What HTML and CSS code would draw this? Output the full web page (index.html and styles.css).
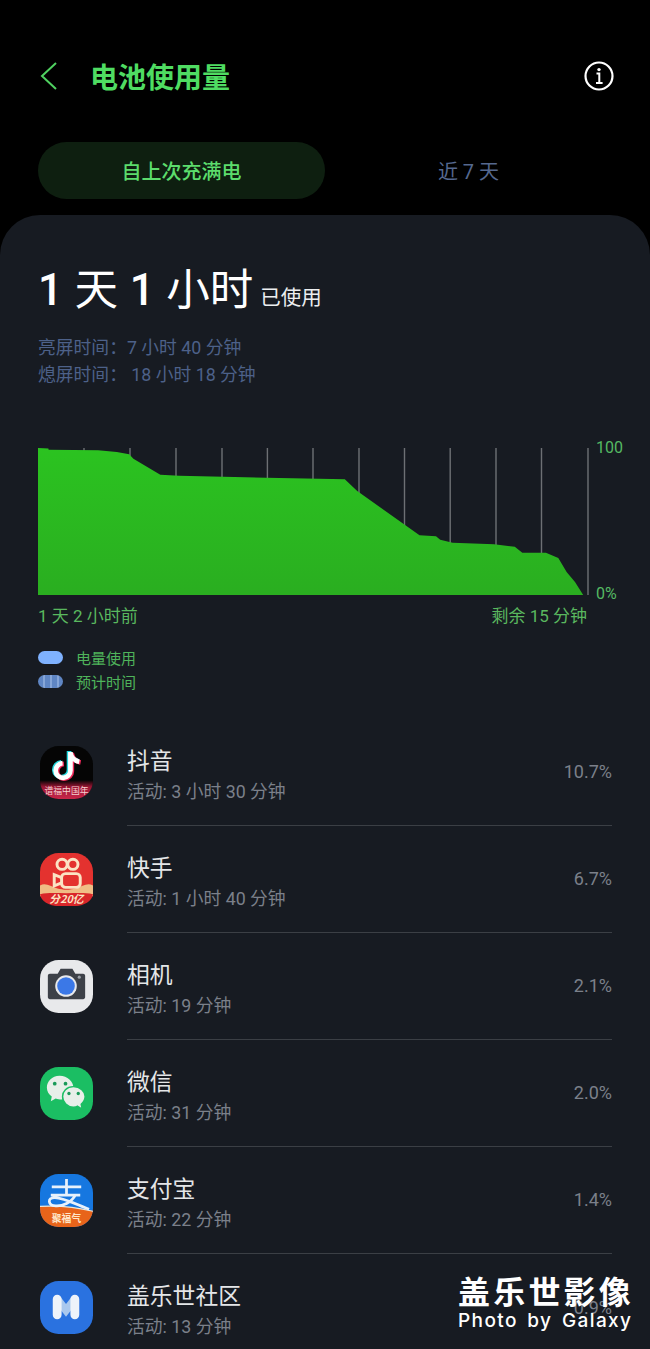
FILE: index.html
```html
<!DOCTYPE html>
<html lang="zh">
<head>
<meta charset="utf-8">
<title>电池使用量</title>
<link rel="stylesheet" href="styles.css">
</head>
<body>
<div class="screen">
  <header class="header">
    <svg class="back" width="20" height="30" viewBox="0 0 20 30"><path d="M18 2 L4 15 L18 28" fill="none" stroke="#4fd160" stroke-width="2"/></svg>
    <h1 class="title">电池使用量</h1>
    <svg class="info" width="30" height="30" viewBox="0 0 30 30"><circle cx="15" cy="15" r="13.500" fill="none" stroke="#fff" stroke-width="2.200"/><circle cx="15" cy="8.600" r="1.700" fill="#fff"/><path d="M12.500 12.600h2.800v9.400M12 22h6.600" fill="none" stroke="#fff" stroke-width="2"/></svg>
  </header>
  <nav class="tabs">
    <div class="tab tab-active">自上次充满电</div>
    <div class="tab">近 7 天</div>
  </nav>
  <main class="card">
    <div class="summary">
      <span class="big"><span class="num">1</span> 天 <span class="num">1</span> 小时</span>
      <span class="used">已使用</span>
    </div>
    <div class="times">
      <div>亮屏时间：7 小时 40 分钟</div>
      <div>熄屏时间： 18 小时 18 分钟</div>
    </div>
    <div class="chart-row">
      <svg class="chart" width="552" height="148" viewBox="0 0 552 148">
        <g stroke="#6d7074" stroke-width="1.400">
          <path d="M46 0V147M92 0V147M138 0V147M184 0V147M229.400 0V147M275 0V147M321 0V147M366.500 0V147M412.200 0V147M458 0V147M503.500 0V147M550 0V147"/>
        </g>
        <defs>
          <linearGradient id="area" x1="0" y1="0" x2="0" y2="1">
            <stop offset="0" stop-color="#2bc320"/>
            <stop offset="1" stop-color="#2aae20"/>
          </linearGradient>
        </defs>
        <path fill="url(#area)" d="M0 0L10.400 0.400L10.600 1.700L60.100 2.300L78.800 4L91.200 6.300L95.400 10.700L122.300 26.700L141 27.700L228 29.700L306.800 31.300L319.200 43L381.500 87.300L398 88.300L402.200 91.700L414.600 94.700L456 96.300L476.800 98.700L484.300 104.700L507.900 104.700L520.300 110L528.600 124L537 134L545.200 147L0 147Z"/>
      </svg>
      <div class="axis"><span>100</span><span>0%</span></div>
    </div>
    <div class="chart-labels"><span>1 天 2 小时前</span><span>剩余 15 分钟</span></div>
    <div class="legend">
      <div class="legend-item"><span class="swatch"></span>电量使用</div>
      <div class="legend-item"><span class="swatch swatch-est"></span>预计时间</div>
    </div>
    <ul class="apps">
      <li class="app">
        <svg class="icon" width="53" height="53" viewBox="0 0 54 54">
          <defs>
            <linearGradient id="tkband" x1="0" y1="0" x2="0" y2="1">
              <stop offset="0" stop-color="#050505"/>
              <stop offset=".35" stop-color="#9a1534"/>
              <stop offset="1" stop-color="#c8274a"/>
            </linearGradient>
          </defs>
          <rect width="54" height="54" rx="19" fill="#050505"/>
          <path d="M0 35H54C54 46 46 54 35 54H19C8 54 0 46 0 35Z" fill="url(#tkband)"/>
          <text x="27" y="49" class="icon-text" font-size="9" fill="#f6d0d0">谱福中国年</text>
          <g fill="none" stroke-width="4.800">
            <path d="M31 6V25A7.500 7.500 0 1 1 23 17.500M31 7C32 12 35 15 40 16" stroke="#25d7de" transform="translate(-1.400 -.8)"/>
            <path d="M31 6V25A7.500 7.500 0 1 1 23 17.500M31 7C32 12 35 15 40 16" stroke="#f2295b" transform="translate(1.400 .8)"/>
            <path d="M31 6V25A7.500 7.500 0 1 1 23 17.500M31 7C32 12 35 15 40 16" stroke="#fff"/>
          </g>
        </svg>
        <div class="app-body">
          <div><div class="app-name">抖音</div><div class="app-sub">活动: 3 小时 30 分钟</div></div>
          <div class="pct">10.7%</div>
        </div>
      </li>
      <li class="app">
        <svg class="icon" width="53" height="53" viewBox="0 0 54 54">
          <rect width="54" height="54" rx="19" fill="#e4322f"/>
          <path d="M0 33C6 30 11 34 17 36C24 38 30 38 37 36C43 34 48 30 54 33V44H0Z" fill="#f0bd85"/>
          <path d="M0 42C9 40 18 41 27 41C36 41 45 40 54 42C53 49 45 54 35 54H19C9 54 1 49 0 42Z" fill="#d9262a"/>
          <g fill="none" stroke="#fbe3c4" stroke-width="3">
            <circle cx="22.500" cy="11.500" r="5.200"/>
            <circle cx="33.500" cy="11.500" r="5.200"/>
            <rect x="22" y="21" width="19" height="14" rx="4"/>
            <path d="M22 25L14.500 22V33.500L22 30.500"/>
          </g>
          <text x="27" y="50.500" class="icon-text" font-size="11" font-style="italic" font-weight="700" fill="#fbe3c4">分20亿</text>
        </svg>
        <div class="app-body">
          <div><div class="app-name">快手</div><div class="app-sub">活动: 1 小时 40 分钟</div></div>
          <div class="pct">6.7%</div>
        </div>
      </li>
      <li class="app">
        <svg class="icon" width="53" height="53" viewBox="0 0 54 54">
          <rect width="54" height="54" rx="19" fill="#e8e9eb"/>
          <path d="M10 14H18L21 9H33L36 14H44C45 14 46 15 46 16V38C46 39 45 40 44 40H10C9 40 8 39 8 38V16C8 15 9 14 10 14Z" fill="#3d4148"/>
          <circle cx="26.500" cy="26.500" r="11" fill="#e8e9eb"/>
          <circle cx="26.500" cy="26.500" r="9" fill="#3b78e7"/>
          <circle cx="40" cy="17.500" r="1.600" fill="#9aa0a6"/>
        </svg>
        <div class="app-body">
          <div><div class="app-name">相机</div><div class="app-sub">活动: 19 分钟</div></div>
          <div class="pct">2.1%</div>
        </div>
      </li>
      <li class="app">
        <svg class="icon" width="53" height="53" viewBox="0 0 54 54">
          <rect width="54" height="54" rx="19" fill="#1bbe63"/>
          <path d="M20 9C12 9 7 15 7 21C7 25 9 28 12 30L11 35L16 32C18 33 20 33 22 33C29 33 34 27 34 21C34 15 28 9 20 9Z" fill="#e8efe9"/>
          <path d="M34 20C27 20 23 25 23 30C23 36 28 41 34 41C36 41 37 41 38 40L43 43L42 38C44 36 46 33 46 30C46 25 41 20 34 20Z" fill="#e8efe9" stroke="#1bbe63" stroke-width="1.500"/>
          <circle cx="15" cy="17" r="1.900" fill="#1a9a58"/><circle cx="26" cy="17" r="1.900" fill="#1a9a58"/>
          <circle cx="29.500" cy="27" r="1.700" fill="#1a9a58"/><circle cx="39" cy="27" r="1.700" fill="#1a9a58"/>
        </svg>
        <div class="app-body">
          <div><div class="app-name">微信</div><div class="app-sub">活动: 31 分钟</div></div>
          <div class="pct">2.0%</div>
        </div>
      </li>
      <li class="app">
        <svg class="icon" width="53" height="53" viewBox="0 0 54 54">
          <rect width="54" height="54" rx="19" fill="#1677e0"/>
          <path d="M0 33C18 32 38 34 54 38V35C54 46 46 54 35 54H19C8 54 0 46 0 35Z" fill="#e8641a"/>
          <path d="M0 33C18 32 38 34 54 38" fill="none" stroke="#f0e8d8" stroke-width="1.200"/>
          <g fill="none" stroke="#e8f1fb" stroke-width="2.800">
            <path d="M12 13H42M27 5V21M11 21.500H41M36 21.500C32 29 23 33 16 32.500C8 32 7 24 15 24C24 24 37 31 50 36"/>
          </g>
          <text x="27" y="49" class="icon-text" font-size="10" font-weight="700" fill="#ffe6c8">聚福气</text>
        </svg>
        <div class="app-body">
          <div><div class="app-name">支付宝</div><div class="app-sub">活动: 22 分钟</div></div>
          <div class="pct">1.4%</div>
        </div>
      </li>
      <li class="app">
        <svg class="icon" width="53" height="53" viewBox="0 0 54 54">
          <rect width="54" height="54" rx="19" fill="#2a72e0"/>
          <path d="M18 19L26.500 30L35 19" fill="none" stroke="#a9c8ee" stroke-width="8" stroke-linecap="round"/>
          <path d="M17.500 18.500V34.500M35.500 18.500V34.500" fill="none" stroke="#eef3fa" stroke-width="9" stroke-linecap="round"/>
        </svg>
        <div class="app-body">
          <div><div class="app-name">盖乐世社区</div><div class="app-sub">活动: 13 分钟</div></div>
          <div class="pct">0.9%</div>
        </div>
      </li>
    </ul>
  </main>
  <div class="watermark">
    <div class="wm-cn">盖乐世影像</div>
    <div class="wm-en">Photo by Galaxy</div>
  </div>
</div>
</body>
</html>
```
FILE: styles.css
```css
* { box-sizing: border-box; }
html, body { margin: 0; padding: 0; background: #000; }
body { font-family: Roboto, "Noto Sans CJK SC", sans-serif; }
.screen { position: relative; width: 650px; height: 1349px; overflow: hidden; background: #000; }

.header { display: flex; align-items: center; height: 152px; padding: 0 36px 0 38px; margin-bottom: -10px; }
.back { flex: none; margin-right: 32px; }
.title { flex: 1; margin: 6px 0 0; font-size: 28px; font-weight: 700; line-height: 40px; color: #4fdc62; }
.info { flex: none; }

.tabs { display: flex; height: 57px; margin: 0 38px 16px; }
.tab { display: flex; align-items: center; justify-content: center; width: 287px; font-size: 20px; color: #55688f; }
.tab-active { border-radius: 29px; background: #0e1f10; color: #5cdc6c; font-weight: 500; }

.card { height: 1200px; padding: 44px 38px 0; background: #171b22; border-radius: 40px 40px 0 0; }
.summary { display: flex; align-items: baseline; height: 64px; color: #fff; }
.big { font-size: 43.500px; line-height: 64px; font-weight: 400; word-spacing: 1px; }
.num { font-weight: 500; }
.used { margin-left: 7px; font-size: 20.500px; color: #eceef0; }
.times { margin-top: 11px; font-size: 17.800px; line-height: 27px; color: #4d6189; }

.chart-row { display: flex; align-items: stretch; margin-top: 60px; height: 148px; }
.chart { flex: none; display: block; }
.axis { display: flex; flex-direction: column; justify-content: space-between; height: 166px; margin: -10px 0 -8px 6px; font-size: 16px; line-height: 20px; color: #55b962; }

.chart-labels { display: flex; justify-content: space-between; width: 549px; margin-top: 8px; font-size: 17px; line-height: 24px; color: #5ab85f; }

.legend { margin-top: 17px; }
.legend-item { display: flex; align-items: center; height: 24px; font-size: 15px; color: #4fb45b; }
.swatch { width: 25px; height: 13px; margin-right: 13px; border-radius: 7px; background: #7fb2ff; }
.swatch-est { background: repeating-linear-gradient(90deg, #5f86c4 0 5px, #86a6d8 5px 7px); }

.apps { list-style: none; margin: 26px 0 0; padding: 0; }
.app { display: flex; height: 107px; margin-left: 2px; }
.icon { flex: none; margin-top: 27px; margin-right: 34px; }
.app-body { flex: 1; display: flex; align-items: center; justify-content: space-between; padding-top: 9px; border-bottom: 1.500px solid #3b3f45; }
.app:last-child .app-body { border-bottom: 0; }
.app-name { font-size: 22.800px; line-height: 30px; color: #e4e6e8; }
.app-sub { font-size: 17.800px; line-height: 30px; color: #7b808a; }
.pct { margin-top: -10px; font-size: 18px; color: #7b808a; }
.icon-text { font-family: "Noto Sans CJK SC", sans-serif; text-anchor: middle; }

.watermark { position: absolute; left: 458px; top: 1270px; width: 176px; color: #fff; }
.wm-cn { font-size: 32px; line-height: 40px; font-weight: 700; letter-spacing: 3.200px; white-space: nowrap; font-family: "Noto Sans CJK SC", sans-serif; }
.wm-en { font-family: Inter, sans-serif; font-size: 19px; line-height: 21px; font-weight: 500; letter-spacing: 1.400px; word-spacing: 3px; white-space: nowrap; }
```
